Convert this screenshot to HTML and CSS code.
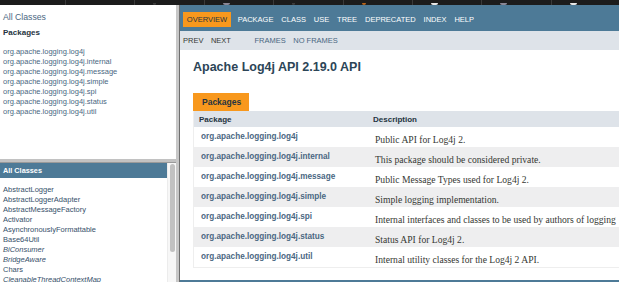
FILE: index.html
```html
<!DOCTYPE html>
<html lang="en">
<head>
  <meta charset="UTF-8" />
  <title>Overview (Apache Log4j API 2.19.0 API)</title>
  <link rel="stylesheet" href="styles.css">
</head>
<body>

  <!-- tira de pestañas del navegador -->
  <div class="tabs">
    <div class="tab"><span class="fav"></span></div>
    <div class="tab"><span class="fav dim"></span></div>
    <div class="tab"><span class="fav grey"></span></div>
    <div class="tab"><span class="fav dim"></span></div>
    <div class="tab"><span class="fav orange"></span></div>
    <div class="tab"><span class="fav white"></span></div>
    <div class="tab"><span class="fav grey"></span></div>
    <div class="tab"><span class="fav white"></span></div>
    <div class="tab"><span class="fav white"></span></div>
  </div>

  <div class="frames">

    <!-- COLUMNA IZQUIERDA -->
    <div class="left">
      <div class="frame-packages">
        <a class="all-link" href="#">All Classes</a>
        <h2 class="frame-title">Packages</h2>
        <ul class="pkg-list">
          <li><a href="#">org.apache.logging.log4j</a></li>
          <li><a href="#">org.apache.logging.log4j.internal</a></li>
          <li><a href="#">org.apache.logging.log4j.message</a></li>
          <li><a href="#">org.apache.logging.log4j.simple</a></li>
          <li><a href="#">org.apache.logging.log4j.spi</a></li>
          <li><a href="#">org.apache.logging.log4j.status</a></li>
          <li><a href="#">org.apache.logging.log4j.util</a></li>
        </ul>
      </div>

      <div class="hsplit"></div>

      <div class="frame-classes">
        <div class="classes-body">
          <h1 class="bar">All Classes</h1>
          <ul class="class-list">
            <li><a href="#">AbstractLogger</a></li>
            <li><a href="#">AbstractLoggerAdapter</a></li>
            <li><a href="#">AbstractMessageFactory</a></li>
            <li><a href="#">Activator</a></li>
            <li><a href="#">AsynchronouslyFormattable</a></li>
            <li><a href="#">Base64Util</a></li>
            <li><a href="#" class="iface">BiConsumer</a></li>
            <li><a href="#" class="iface">BridgeAware</a></li>
            <li><a href="#">Chars</a></li>
            <li><a href="#" class="iface">CleanableThreadContextMap</a></li>
          </ul>
        </div>
        <div class="track"><div class="thumb"></div></div>
      </div>
    </div>

    <div class="vsplit"></div>

    <!-- MARCO PRINCIPAL -->
    <div class="main">
      <ul class="top-nav">
        <li class="active">Overview</li>
        <li><a href="#">Package</a></li>
        <li><a href="#">Class</a></li>
        <li><a href="#">Use</a></li>
        <li><a href="#">Tree</a></li>
        <li><a href="#">Deprecated</a></li>
        <li><a href="#">Index</a></li>
        <li><a href="#">Help</a></li>
      </ul>

      <div class="sub-nav">
        <span>Prev</span>
        <span>Next</span>
        <a class="gap" href="#">Frames</a>
        <a href="#">No&nbsp;Frames</a>
      </div>

      <div class="content">
        <h1 class="title">Apache Log4j API 2.19.0 API</h1>

        <div class="caption">Packages</div>
        <table class="summary">
          <tr>
            <th class="col-first">Package</th>
            <th>Description</th>
          </tr>
          <tr>
            <td class="col-first"><a href="#">org.apache.logging.log4j</a></td>
            <td><div class="desc">Public API for Log4j 2.</div></td>
          </tr>
          <tr class="alt">
            <td class="col-first"><a href="#">org.apache.logging.log4j.internal</a></td>
            <td><div class="desc">This package should be considered private.</div></td>
          </tr>
          <tr>
            <td class="col-first"><a href="#">org.apache.logging.log4j.message</a></td>
            <td><div class="desc">Public Message Types used for Log4j 2.</div></td>
          </tr>
          <tr class="alt">
            <td class="col-first"><a href="#">org.apache.logging.log4j.simple</a></td>
            <td><div class="desc">Simple logging implementation.</div></td>
          </tr>
          <tr>
            <td class="col-first"><a href="#">org.apache.logging.log4j.spi</a></td>
            <td><div class="desc">Internal interfaces and classes to be used by authors of logging</div></td>
          </tr>
          <tr class="alt">
            <td class="col-first"><a href="#">org.apache.logging.log4j.status</a></td>
            <td><div class="desc">Status API for Log4j 2.</div></td>
          </tr>
          <tr>
            <td class="col-first"><a href="#">org.apache.logging.log4j.util</a></td>
            <td><div class="desc">Internal utility classes for the Log4j 2 API.</div></td>
          </tr>
        </table>

        <div class="bottom-nav"></div>
      </div>
    </div>

  </div>

</body>
</html>
```

FILE: styles.css
```css
body {
  margin: 0;
  font-family: "Liberation Sans", Arial, sans-serif;
  color: #353833;
  background-color: #ffffff;
  overflow: hidden;
}

a {
  color: #4a6782;
  text-decoration: none;
}

ul {
  list-style: none;
  margin: 0;
  padding: 0;
}

/* pestañas */
.tabs {
  display: flex;
  height: 5px;
  background-color: #1c1c1c;
  padding-left: 65px;
  overflow: hidden;
}

.tab {
  width: 69.4px;
  flex: none;
  border-left: 1px solid #3a3a3a;
  display: flex;
  align-items: flex-end;
  padding-left: 18px;
  box-sizing: border-box;
}

.fav {
  width: 7px;
  height: 2px;
  border-radius: 0 0 4px 4px;
}

.fav.dim { background-color: #3c3c3c; width: 3px; }
.fav.grey { background-color: #8a8796; }
.fav.orange { background-color: #b8651c; width: 4px; }
.fav.white { background-color: #e8e8e8; }

/* marcos */
.frames {
  display: flex;
  height: 277px;
}

.left {
  width: 176px;
  flex: none;
  display: flex;
  flex-direction: column;
}

.vsplit {
  width: 3px;
  flex: none;
  background-color: #c7c7c7;
  border-right: 1px solid #6e6e6e;
}

.hsplit {
  height: 3px;
  flex: none;
  background-color: #c2c2c2;
  border-bottom: 1px solid #9a9a9a;
}

.frame-packages {
  height: 154px;
  flex: none;
  padding: 6px 0 0 3px;
  box-sizing: border-box;
}

.all-link {
  display: block;
  font-size: 8.7px;
  line-height: 12px;
}

.frame-title {
  margin: 5px 0 0;
  font-size: 8px;
  line-height: 10px;
  color: #253441;
}

.pkg-list {
  margin-top: 9px;
  font-size: 7.5px;
  line-height: 10px;
}

.frame-classes {
  flex: 1;
  display: flex;
  overflow: hidden;
}

.classes-body {
  flex: 1;
}

.bar {
  margin: 0;
  height: 15px;
  line-height: 15px;
  padding-left: 3px;
  font-size: 7.3px;
  color: #ffffff;
  background-color: #4d7a97;
}

.class-list {
  padding: 7px 0 0 3px;
  font-size: 7.5px;
  line-height: 10px;
}

.class-list a {
  color: #364f6a;
}

.class-list .iface {
  font-style: italic;
}

.track {
  width: 9px;
  flex: none;
  background-color: #f7f7f7;
  border-left: 1px solid #ececec;
  box-sizing: border-box;
}

.thumb {
  width: 5px;
  height: 88px;
  margin: 1px 0 0 2px;
  border-radius: 3px;
  background-color: #c1c1c1;
}

/* marco principal */
.main {
  flex: 1;
  overflow: hidden;
}

.top-nav {
  display: flex;
  height: 26px;
  box-sizing: border-box;
  padding: 7px 0 0 3px;
  background-color: #4d7a97;
  font-size: 7.5px;
  text-transform: uppercase;
}

.top-nav li {
  height: 15px;
  line-height: 15px;
  padding: 0 3.8px;
  margin-right: 0.3px;
}

.top-nav li a {
  color: #ffffff;
}

.top-nav li.active {
  background-color: #f8981d;
  color: #253441;
  margin-right: 3px;
}

.sub-nav {
  height: 19px;
  line-height: 19px;
  padding-left: 3px;
  background-color: #dee3e9;
  font-size: 7.5px;
  text-transform: uppercase;
  color: #353833;
  display: flex;
  gap: 7.5px;
}

.sub-nav .gap {
  margin-left: 16px;
}

.content {
  padding-left: 13px;
}

.title {
  margin: 11px 0 20px;
  font-size: 12.5px;
  line-height: 12px;
  color: #2c4557;
}

.caption {
  display: inline-block;
  height: 18px;
  line-height: 18px;
  padding: 0 8px 0 9px;
  background-color: #f8981d;
  color: #253441;
  font-size: 8.5px;
  font-weight: bold;
  vertical-align: top;
}

.summary {
  width: 470px;
  table-layout: fixed;
  border-collapse: collapse;
  border: 1px solid #eeeeee;
  border-top: none;
}

.summary th {
  height: 16px;
  padding: 0 0 0 5px;
  text-align: left;
  font-size: 8px;
  color: #253441;
  background-color: #dee3e9;
}

.summary th.col-first {
  width: 169px;
}

.summary td {
  height: 20px;
  padding: 0 0 0 7px;
  vertical-align: top;
  box-sizing: border-box;
  overflow: hidden;
}

.summary td.col-first a {
  display: block;
  padding-top: 5px;
  font-size: 8.2px;
  line-height: 10px;
  font-weight: bold;
}

.summary tr.alt td {
  background-color: #eeeeef;
}

.desc {
  padding-top: 7px;
  font-family: "Liberation Serif", "Times New Roman", serif;
  font-size: 9.6px;
  line-height: 12px;
  white-space: nowrap;
  color: #353833;
}

.bottom-nav {
  margin-top: 12px;
  margin-left: -13px;
  height: 26px;
  background-color: #4d7a97;
}
```
